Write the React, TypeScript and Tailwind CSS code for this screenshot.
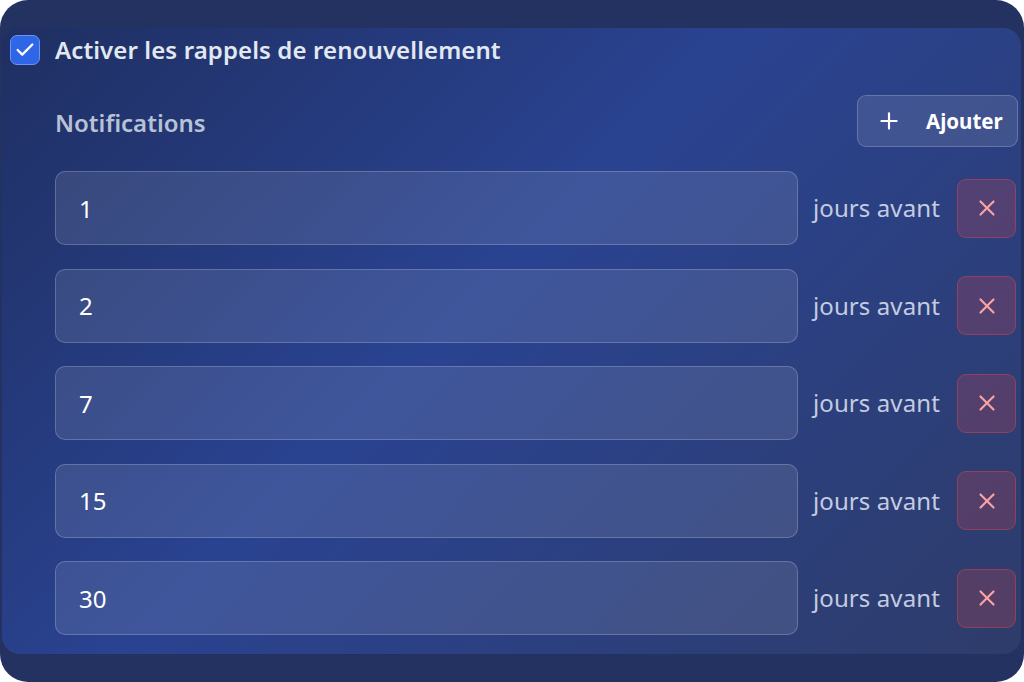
import React, { useState } from 'react';
import { Check, Plus, X } from 'lucide-react';

export default function App() {
  const [enabled, setEnabled] = useState(true);
  const [days, setDays] = useState<string[]>(['1', '2', '7', '15', '30']);

  const update = (idx: number, val: string) => {
    const next = [...days];
    next[idx] = val;
    setDays(next);
  };

  return (
    <div className="w-[1024px] h-[682px] bg-white font-['Noto_Sans','Open_Sans',sans-serif]">
      <div className="w-full h-full bg-[#233260] rounded-[28px] overflow-hidden pt-[28px] pb-[28px] pl-[2px] pr-[3px]">
        <div className="h-full rounded-[18px] bg-[linear-gradient(135deg,#1f2f62_0%,#2a4391_45%,#2e3c6a_100%)] pl-[8px] pr-[3px] pt-[7px]">
          <label className="flex items-center gap-[15px] h-[30px]">
            <button
              onClick={() => setEnabled(!enabled)}
              className="w-[30px] h-[30px] rounded-[7px] bg-[#2f66e8] border border-[#6b93f0] flex items-center justify-center"
            >
              {enabled && <Check size={22} strokeWidth={2.5} className="text-white" />}
            </button>
            <span className="text-[24px] font-semibold text-[#e2e8f0] tracking-[0.1px]">Activer les rappels de renouvellement</span>
          </label>

          <div className="pl-[45px] mt-[30px]">
            <div className="flex items-center justify-between h-[52px]">
              <span className="text-[24px] font-semibold text-[#b8c2d6] pt-[4px]">Notifications</span>
              <button className="h-[52px] w-[161px] rounded-[9px] bg-white/10 border border-white/20 flex items-center pl-[18px] gap-[24px] text-white">
                <Plus size={26} strokeWidth={2} />
                <span className="text-[20.5px] font-bold">Ajouter</span>
              </button>
            </div>

            <div className="flex flex-col gap-[23.5px] mt-[24px]">
              {days.map((d, i) => (
                <div key={i} className="flex items-center">
                  <input
                    value={d}
                    onChange={(e) => update(i, e.target.value)}
                    className="w-[743px] h-[74px] rounded-[10px] bg-white/10 border border-white/20 pl-[23px] text-[24px] text-white outline-none"
                  />
                  <span className="ml-[15px] w-[128px] text-[24px] text-[#c3cce0] whitespace-nowrap tracking-[0.1px]">jours avant</span>
                  <button className="ml-[16px] w-[59px] h-[59px] rounded-[9px] bg-[#ef4444]/20 border border-[#ef4444]/40 flex items-center justify-center">
                    <X size={26} strokeWidth={2} className="text-[#f9a3a3]" />
                  </button>
                </div>
              ))}
            </div>
          </div>
        </div>
      </div>
    </div>
  );
}
